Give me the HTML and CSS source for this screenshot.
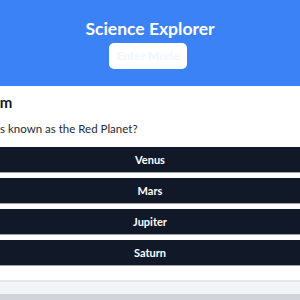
FILE: index.html
```
<!DOCTYPE html>
<html lang="en">
	<head>
		<meta charset="utf-8">
		<title>Science Explorer</title>
		<link rel="stylesheet" href="styles.css">
	</head>
	<body>
		<div class="header">
			<h1 class="title">Science Explorer</h1>
			<a href="javascript:;" class="mode-btn">Enter Mode</a>
		</div>

		<div class="quiz">
			<div class="quiz-text">
				<h2 class="quiz-title">Solar System</h2>
				<p class="question">Which planet is known as the Red Planet?</p>
			</div>
			<div class="answers">
				<a href="javascript:;" class="answer">Venus</a>
				<a href="javascript:;" class="answer">Mars</a>
				<a href="javascript:;" class="answer">Jupiter</a>
				<a href="javascript:;" class="answer">Saturn</a>
			</div>
		</div>

		<div class="footer"></div>
		<div class="footer-bar"></div>
	</body>
</html>
```

FILE: styles.css
```
body {
	margin: 0;
	font-family: Lato, "Noto Sans", sans-serif;
	background-color: #fff;
	overflow: hidden;
}
a {
	text-decoration: none;
}

.header {
	height: 86px;
	background-color: #3b82f6;
	text-align: center;
	box-sizing: border-box;
	padding-top: 17px;
}

.title {
	margin: 0;
	font-size: 17.5px;
	line-height: 24px;
	color: #fff;
	font-weight: 700;
}

.mode-btn {
	display: inline-block;
	width: 78px;
	height: 26px;
	line-height: 26px;
	margin-top: 2px;
	margin-left: -4px;
	border-radius: 5px;
	background-color: #fff;
	color: #f3f6fb;
	font-size: 12px;
	font-weight: 700;
}

.quiz {
	height: 194px;
}

.quiz-text {
	margin-left: -73px;
	white-space: nowrap;
}

.quiz-title {
	margin: 0;
	padding-top: 5px;
	font-size: 15px;
	line-height: 22px;
	font-weight: 700;
	color: #111827;
}

.question {
	margin: 0;
	padding-top: 7px;
	font-size: 11.5px;
	line-height: 18px;
	color: #1f2937;
}

.answers {
	display: flex;
	flex-direction: column;
	gap: 5px;
	margin-top: 9px;
}

.answer {
	display: block;
	height: 25px;
	line-height: 25px;
	text-align: center;
	background-color: #111827;
	border-bottom: 1px solid #9ca3af;
	color: #fff;
	font-size: 11px;
	font-weight: 700;
}

.footer {
	height: 12px;
	border-top: 2px solid #e5e7eb;
	background-color: #f3f4f6;
}

.footer-bar {
	height: 8px;
	background-color: #d1d5db;
}
```
